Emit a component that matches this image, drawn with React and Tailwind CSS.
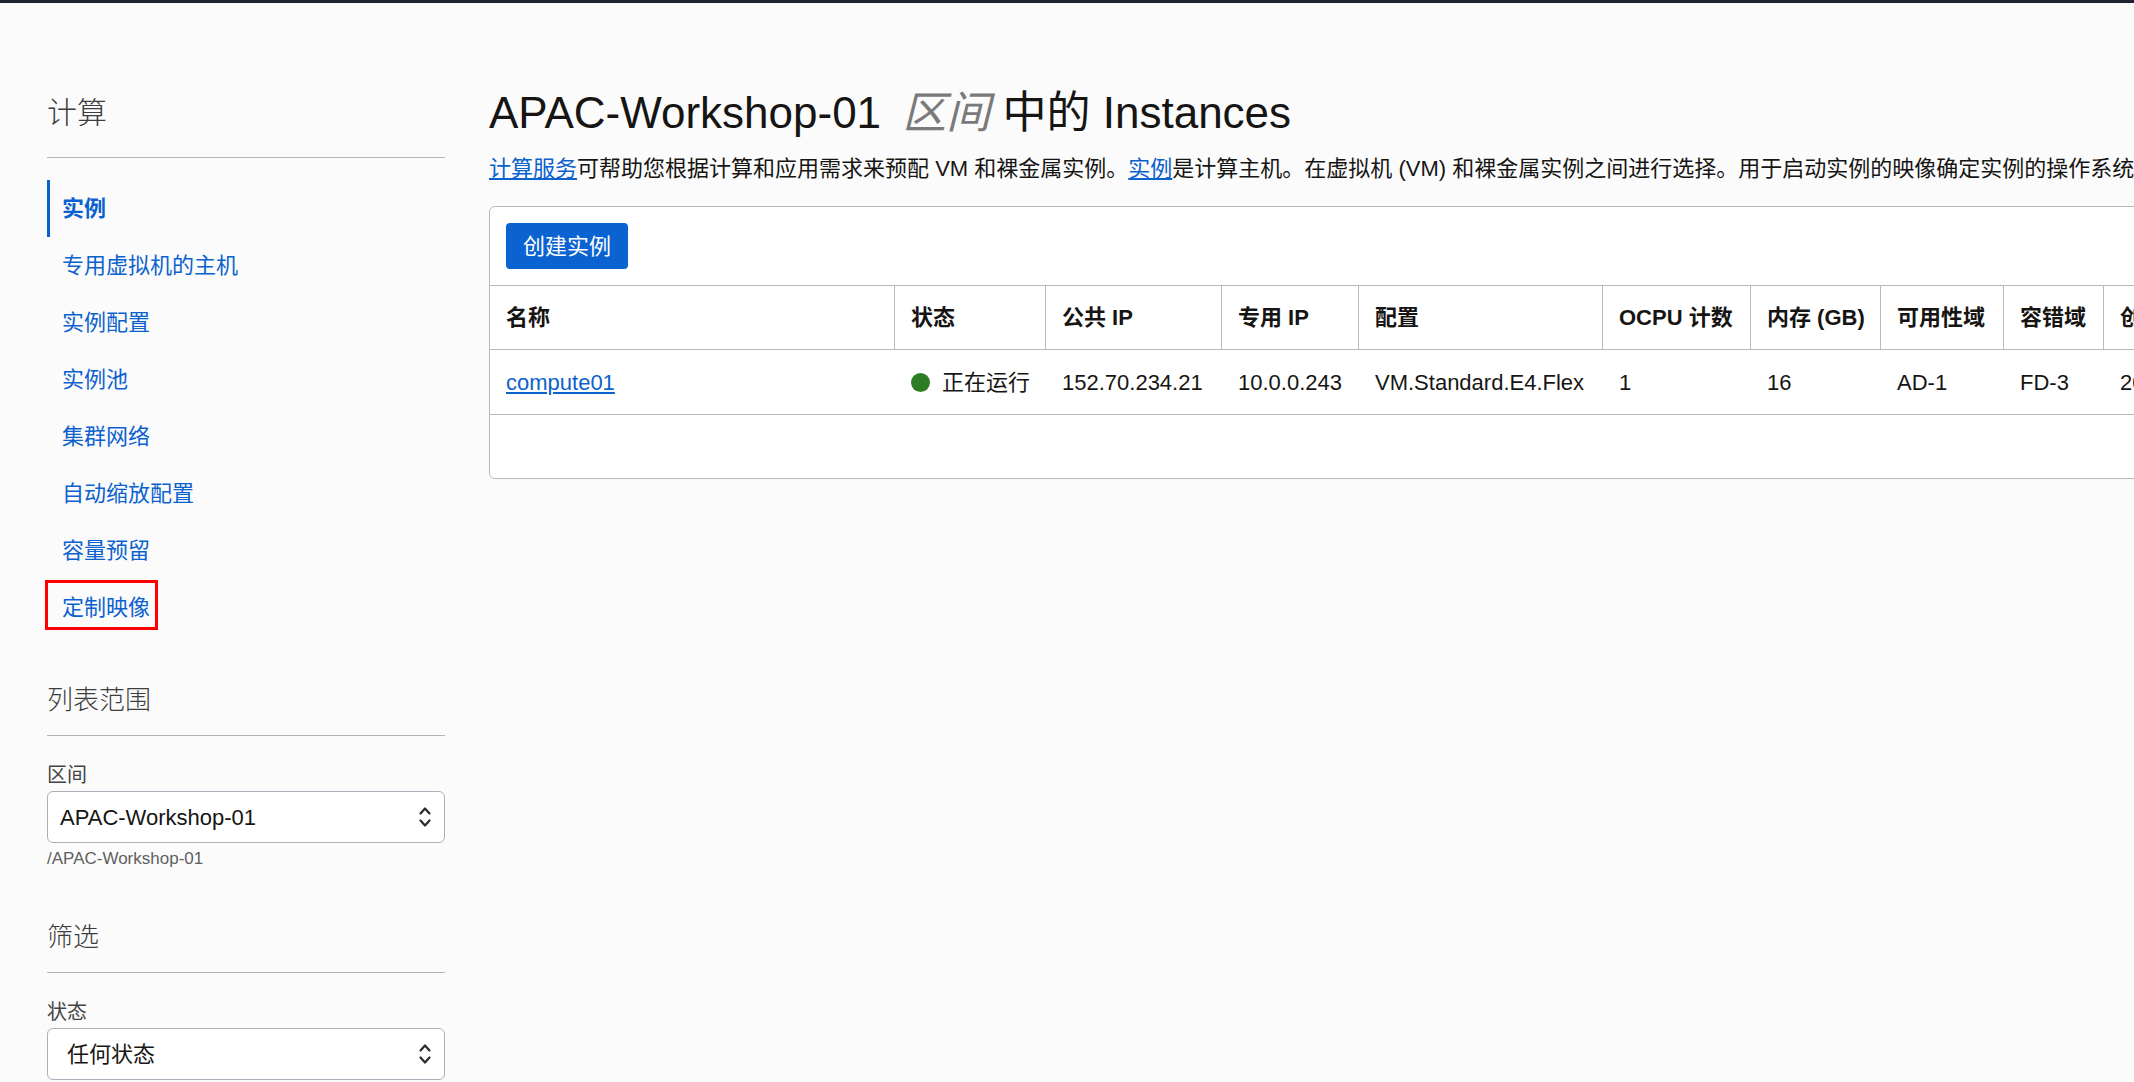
import React from "react";

const navItems = [
  "实例",
  "专用虚拟机的主机",
  "实例配置",
  "实例池",
  "集群网络",
  "自动缩放配置",
  "容量预留",
  "定制映像",
];

function Chevrons() {
  return (
    <svg width="14" height="24" viewBox="0 0 14 24" fill="none" stroke="#2a2a2a" strokeWidth="2.2" strokeLinecap="round" strokeLinejoin="round">
      <path d="M2.5 8.5 L7 3.5 L11.5 8.5" />
      <path d="M2.5 15.5 L7 20.5 L11.5 15.5" />
    </svg>
  );
}

const headers = ["名称", "状态", "公共 IP", "专用 IP", "配置", "OCPU 计数", "内存 (GB)", "可用性域", "容错域", "创建时间"];

export default function App() {
  return (
    <div className="w-[2134px] h-[1082px] overflow-hidden bg-[#fbfbfb] text-[#161513] font-['Liberation_Sans','Noto_Sans_CJK_SC',sans-serif]">
      <div className="h-[3px] bg-[#1c2530]" />
      <div className="flex pl-[47px]">
        <aside className="w-[398px] shrink-0 pt-[92px]">
          <h2 className="text-[30px] leading-[36px] font-light text-[#3d3d3d] pb-[26px] border-b border-[#b3b6bd]">计算</h2>
          <nav className="mt-[22px] flex flex-col">
            {navItems.map((item, i) => (
              <div
                key={item}
                className={
                  i === 0
                    ? "h-[57px] flex items-center pl-[12px] border-l-[3px] border-[#0b62cf] text-[22px] font-bold text-[#0b62cf]"
                    : "relative h-[57px] flex items-center pl-[15px] text-[22px] text-[#0b62cf]"
                }
              >
                {item}
                {i === 7 && (
                  <span className="absolute left-[-2px] top-[1px] w-[113px] h-[50px] border-[3px] border-[#ff0000]" />
                )}
              </div>
            ))}
          </nav>

          <h3 className="mt-[48px] text-[26px] leading-[32px] font-light text-[#3d3d3d] pb-[19px] border-b border-[#b3b6bd]">列表范围</h3>
          <div className="mt-[27px] text-[20px] leading-[24px] text-[#444]">区间</div>
          <div className="mt-[4px] h-[52px] flex items-center justify-between pl-[12px] pr-[12px] bg-white border border-[#aab0ba] rounded-[6px] text-[22px]">
            <span>APAC-Workshop-01</span>
            <Chevrons />
          </div>
          <div className="mt-[6px] text-[17px] leading-[20px] text-[#5f5f5f]">/APAC-Workshop-01</div>

          <h3 className="mt-[52px] text-[26px] leading-[32px] font-light text-[#3d3d3d] pb-[19px] border-b border-[#b3b6bd]">筛选</h3>
          <div className="mt-[27px] text-[20px] leading-[24px] text-[#444]">状态</div>
          <div className="mt-[4px] h-[52px] flex items-center justify-between pl-[19px] pr-[12px] bg-white border border-[#aab0ba] rounded-[6px] text-[22px]">
            <span>任何状态</span>
            <Chevrons />
          </div>
        </aside>

        <main className="ml-[44px] flex-1 min-w-0 pt-[84px]">
          <h1 className="text-[44px] leading-[52px] font-normal whitespace-nowrap">
            APAC-Workshop-01 <em className="ml-[9px] text-[#7a7a7a]">区间</em> 中的 Instances
          </h1>
          <p className="mt-[15px] text-[22px] leading-[30px] whitespace-nowrap">
            <a className="text-[#0b62cf] underline">计算服务</a>可帮助您根据计算和应用需求来预配 VM 和裸金属实例。<a className="text-[#0b62cf] underline">实例</a>是计算主机。在虚拟机 (VM) 和裸金属实例之间进行选择。用于启动实例的映像确定实例的操作系统和其他软件。
          </p>

          <div className="mt-[22px] w-[1960px] bg-white border border-[#b5b9c0] rounded-[6px]">
            <div className="p-[16px] border-b border-[#b5b9c0]">
              <button className="h-[46px] w-[122px] rounded-[4px] bg-[#0b63d1] text-white text-[22px]">创建实例</button>
            </div>
            <div className="grid grid-cols-[404px_151px_176px_137px_244px_148px_130px_123px_100px_345px] text-[22px]">
              {headers.map((h, i) => (
                <div
                  key={h}
                  className={
                    (i === 0 ? "" : "border-l border-l-[#b5b9c0] ") +
                    "h-[64px] flex items-center px-[16px] font-bold whitespace-nowrap border-b border-b-[#b5b9c0]"
                  }
                >
                  {h}
                </div>
              ))}
              <div className="h-[65px] flex items-center px-[16px] border-b border-b-[#b5b9c0]">
                <a className="text-[#0b62cf] underline">compute01</a>
              </div>
              <div className="h-[65px] flex items-center pl-[17px] border-b border-b-[#b5b9c0] whitespace-nowrap">
                <span className="w-[19px] h-[19px] rounded-full bg-[#2c7d24] mr-[12px]" />
                正在运行
              </div>
              <div className="h-[65px] flex items-center pl-[17px] border-b border-b-[#b5b9c0]">152.70.234.21</div>
              <div className="h-[65px] flex items-center pl-[17px] border-b border-b-[#b5b9c0]">10.0.0.243</div>
              <div className="h-[65px] flex items-center pl-[17px] border-b border-b-[#b5b9c0]">VM.Standard.E4.Flex</div>
              <div className="h-[65px] flex items-center pl-[17px] border-b border-b-[#b5b9c0]">1</div>
              <div className="h-[65px] flex items-center pl-[17px] border-b border-b-[#b5b9c0]">16</div>
              <div className="h-[65px] flex items-center pl-[17px] border-b border-b-[#b5b9c0]">AD-1</div>
              <div className="h-[65px] flex items-center pl-[17px] border-b border-b-[#b5b9c0]">FD-3</div>
              <div className="h-[65px] flex items-center pl-[17px] border-b border-b-[#b5b9c0] whitespace-nowrap">2022年12月6日 上午 2:30:15 UTC</div>
            </div>
            <div className="h-[63px]" />
          </div>
        </main>
      </div>
    </div>
  );
}
